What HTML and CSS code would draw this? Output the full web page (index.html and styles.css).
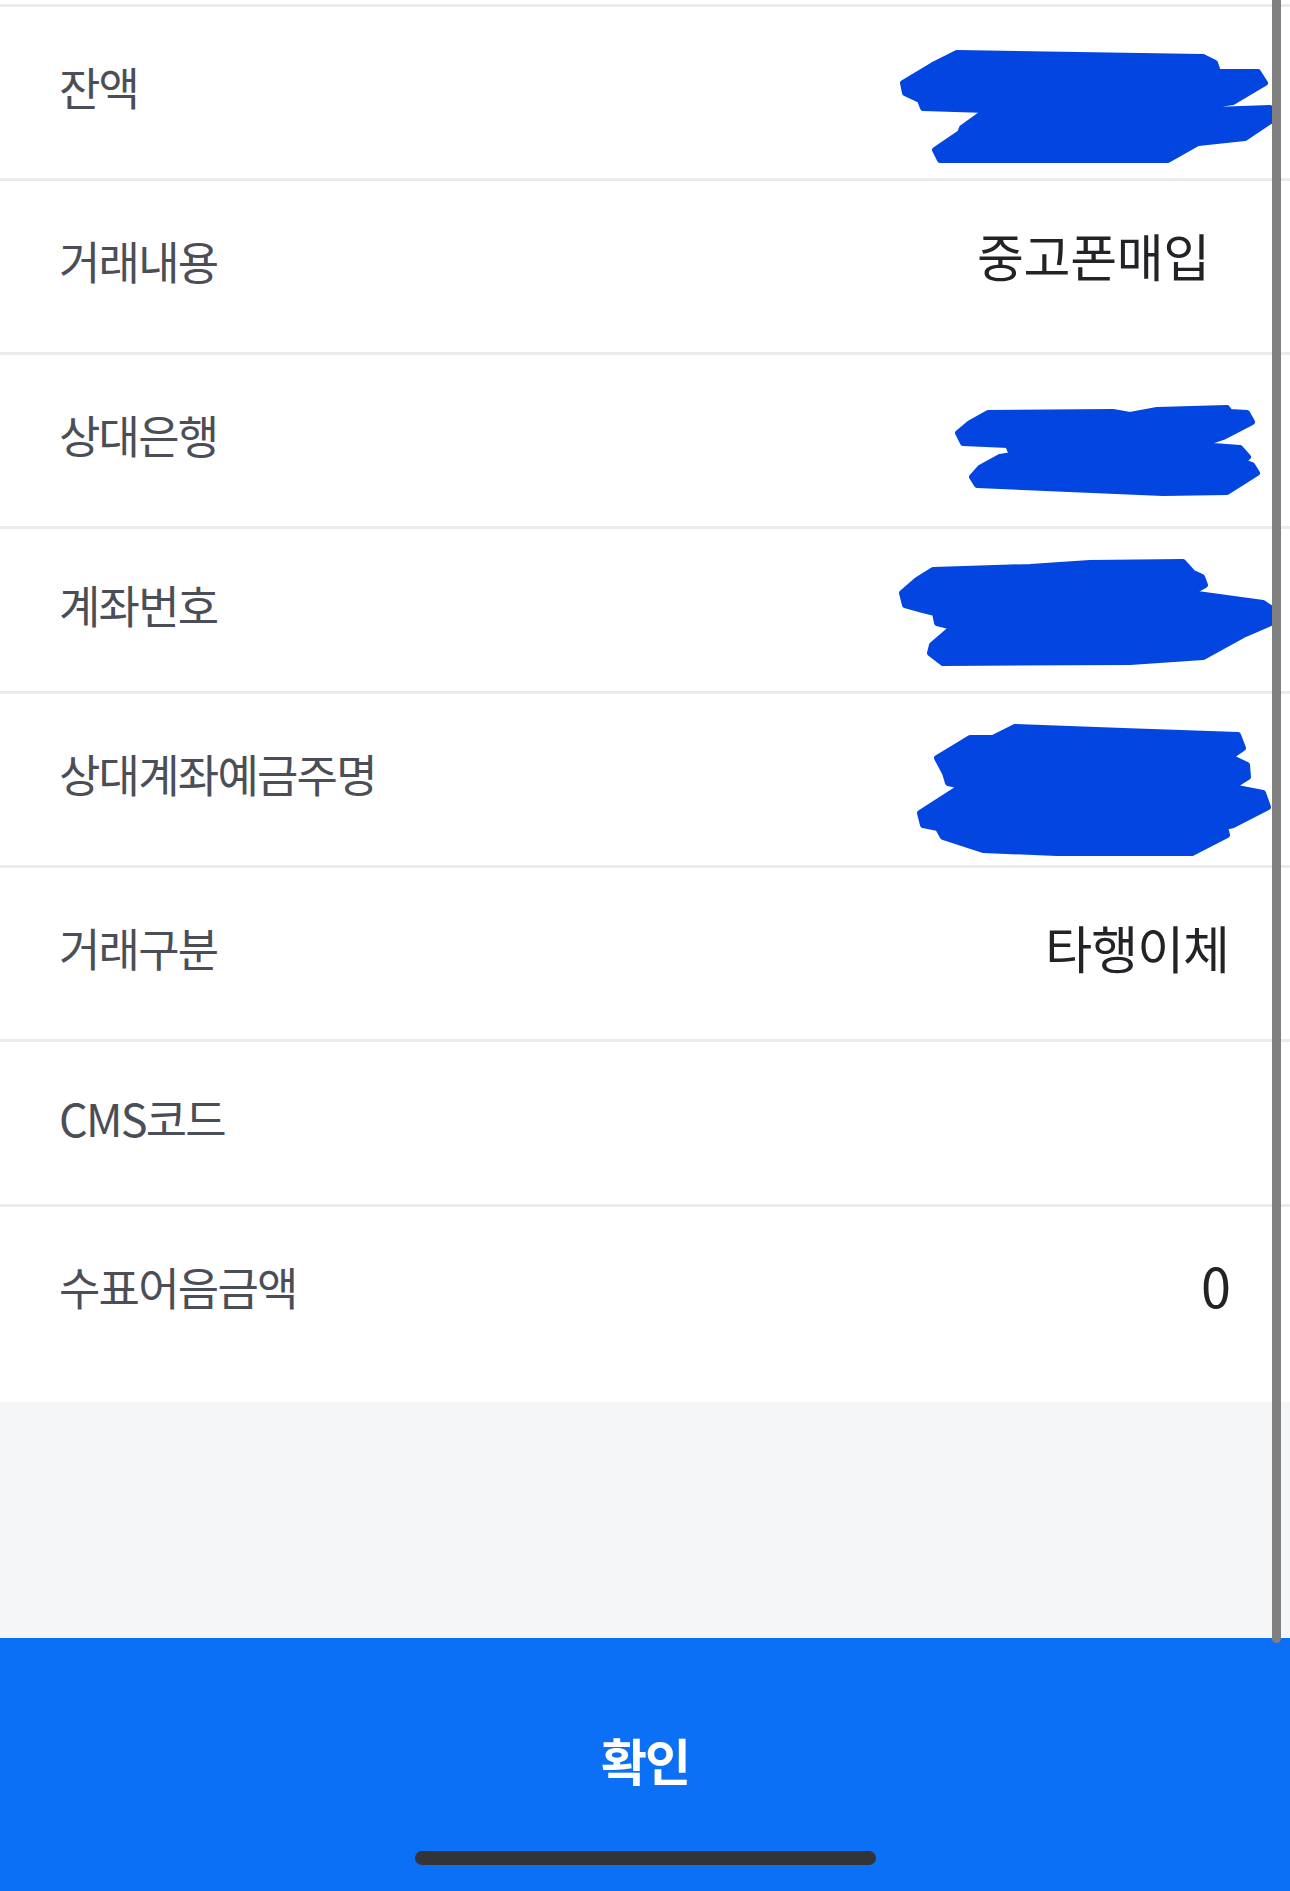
FILE: index.html
```html
<!DOCTYPE html>
<html lang="ko">
<head>
<meta charset="utf-8">
<title>거래상세</title>
<link rel="stylesheet" href="styles.css">
</head>
<body>
<div class="screen">
  <div class="list">
    <div class="row"><span class="label">잔액</span><span class="value"></span></div>
    <div class="row"><span class="label">거래내용</span><span class="value value-shift">중고폰매입</span></div>
    <div class="row"><span class="label">상대은행</span><span class="value"></span></div>
    <div class="row row-short"><span class="label">계좌번호</span><span class="value"></span></div>
    <div class="row"><span class="label">상대계좌예금주명</span><span class="value"></span></div>
    <div class="row"><span class="label">거래구분</span><span class="value">타행이체</span></div>
    <div class="row row-short"><span class="label">CMS코드</span><span class="value"></span></div>
    <div class="row"><span class="label">수표어음금액</span><span class="value value-num">0</span></div>
  </div>
  <div class="spacer"></div>
  <div class="confirm">
    <span class="confirm-text">확인</span>
    <span class="home-indicator"></span>
  </div>

  <svg class="redact" width="1290" height="1891" viewBox="0 0 1290 1891" aria-hidden="true">
    <path d="M903 83 L933 65 L957 53 L1203 57 L1215 63 L1218 72 L1258 72 L1265 83 L1233 102 L1180 110 L1128 113 L1270 108 L1275 118 L1245 138 L1198 143 L1168 160 L940 160 L935 150 L960 133 L962 128 L987 110 L923 108 L920 100 L905 93 Z"/>
    <path d="M958 433 L970 423 L988 413 L1113 412 L1130 415 L1157 410 L1227 408 L1230 412 L1247 413 L1252 422 L1223 437 L1200 445 L1240 448 L1248 457 L1243 462 L1252 465 L1257 473 L1227 492 L1163 493 L977 485 L972 477 L980 468 L1000 457 L1012 455 L1008 445 L963 443 Z"/>
    <path d="M902 593 L917 580 L933 570 L1030 567 L1090 563 L1183 562 L1193 573 L1202 577 L1205 585 L1190 593 L1263 603 L1278 613 L1273 622 L1243 635 L1203 657 L1130 662 L943 663 L930 653 L932 645 L953 627 L937 623 L935 613 L923 610 L905 605 Z"/>
    <path d="M1015 727 L993 738 L970 738 L937 758 L945 773 L948 783 L962 786 L920 813 L923 825 L938 828 L943 837 L983 850 L1057 853 L1192 853 L1227 835 L1225 827 L1233 825 L1268 807 L1263 793 L1232 787 L1248 777 L1247 765 L1230 757 L1243 748 L1238 735 L1123 731 Z"/>
  </svg>
  <div class="scrollbar"></div>
</div>
</body>
</html>
```

FILE: styles.css
```css
* {
  box-sizing: border-box;
}

html, body {
  margin: 0;
  padding: 0;
  background: #ffffff;
}

body {
  font-family: "Noto Sans CJK KR", "Noto Sans", sans-serif;
}

.screen {
  position: relative;
  width: 1290px;
  height: 1891px;
  overflow: hidden;
  display: flex;
  flex-direction: column;
  background: #ffffff;
}

.list {
  padding-top: 4px;
  padding-bottom: 24px;
  background: #ffffff;
}

.row {
  height: 174px;
  border-top: 3px solid #ebebeb;
  display: flex;
  align-items: center;
  justify-content: space-between;
  padding: 0 61px 12px 59px;
}

.row-short {
  height: 165px;
}

.label {
  font-size: 45px;
  letter-spacing: -1.8px;
  color: #4b4e57;
  line-height: 1;
  white-space: nowrap;
}

.value {
  font-size: 51px;
  letter-spacing: -1px;
  color: #222326;
  line-height: 1;
  white-space: nowrap;
}

.value-shift {
  margin-right: 19px;
  margin-bottom: 10px;
  letter-spacing: -0.3px;
}

.value-num {
  font-size: 54px;
  letter-spacing: 0;
  margin-right: -2px;
  margin-bottom: 4px;
}

.spacer {
  height: 236px;
  background: #f5f6f8;
}

.confirm {
  height: 253px;
  background: #0b70f5;
  display: flex;
  flex-direction: column;
  align-items: center;
  padding-top: 92px;
}

.confirm-text {
  font-size: 50px;
  font-weight: 700;
  letter-spacing: -2px;
  line-height: 58px;
  color: #ffffff;
}

.home-indicator {
  display: block;
  width: 461px;
  height: 14px;
  margin-top: 63px;
  border-radius: 7px;
  background: #333438;
}

.redact {
  position: absolute;
  left: 0;
  top: 0;
  pointer-events: none;
}

.redact path {
  fill: #0345e0;
  stroke: #0345e0;
  stroke-width: 6;
  stroke-linejoin: round;
}

.scrollbar {
  position: absolute;
  left: 1272px;
  top: -6px;
  width: 9px;
  height: 1649px;
  border-radius: 5px;
  background: #808080;
}
```
